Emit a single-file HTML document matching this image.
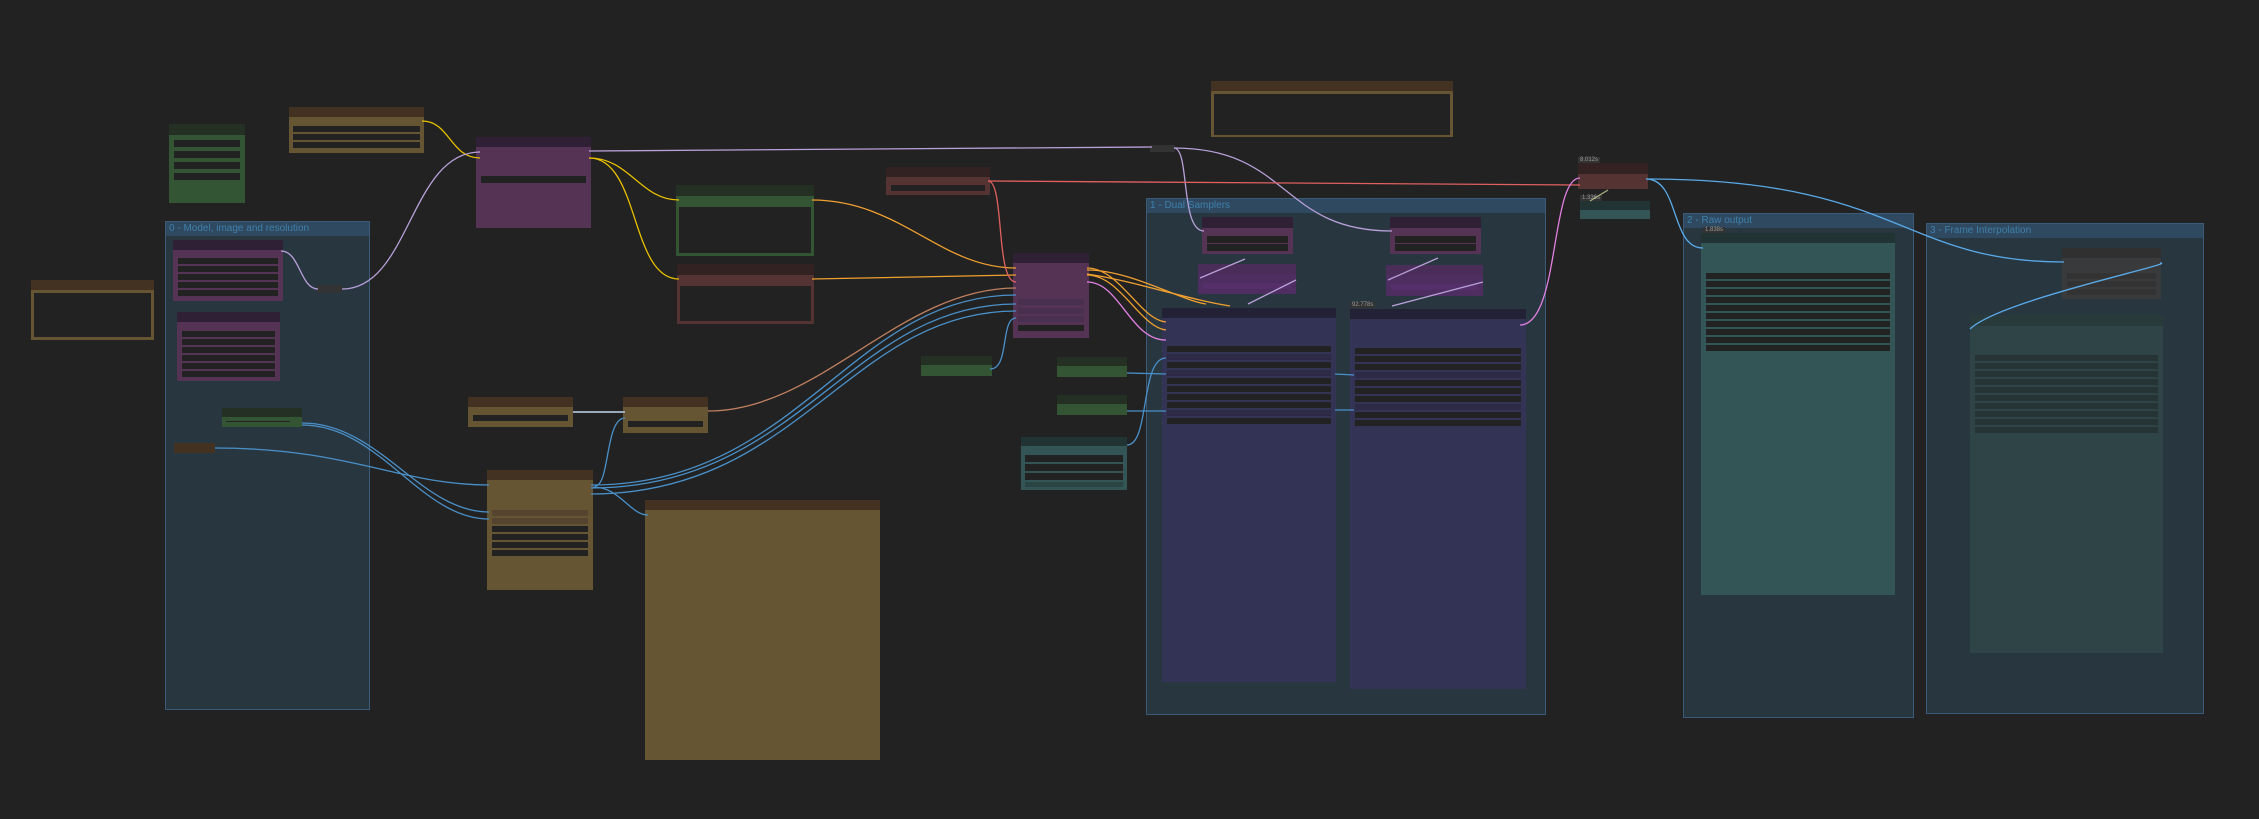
<!DOCTYPE html>
<html><head><meta charset="utf-8"><style>
html,body{margin:0;padding:0;background:#222;width:2259px;height:819px;overflow:hidden;font-family:"Liberation Sans",sans-serif}
.a{position:absolute;box-sizing:border-box}
.g{position:absolute;background:#283640;border:1px solid #3a5a78}
.g .t{height:14px;background:#2f4a60;color:#3f7eaa;font-size:10px;line-height:14px;padding-left:3px;white-space:nowrap;overflow:hidden}
.n{position:absolute}
.h{position:absolute;left:0;right:0;top:0}
.w{position:absolute;background:#222}
.lbl{position:absolute;font-size:6px;color:#999;background:#333;padding:0 2px}
</style></head><body>

<!-- groups -->
<div class="g" style="left:165px;top:221px;width:203px;height:487px"><div class="t">0 - Model, image and resolution</div></div>
<div class="g" style="left:1146px;top:198px;width:398px;height:515px"><div class="t">1 - Dual Samplers</div></div>
<div class="g" style="left:1683px;top:213px;width:229px;height:503px"><div class="t">2 - Raw output</div></div>
<div class="g" style="left:1926px;top:223px;width:276px;height:489px"><div class="t">3 - Frame Interpolation</div></div>

<!-- green node top-left -->
<div class="n" style="left:169px;top:124px;width:76px;height:79px;background:#335533"><div class="h" style="height:11px;background:#233023"></div>
<div class="w" style="left:5px;top:16px;width:66px;height:7px"></div><div class="w" style="left:5px;top:27px;width:66px;height:7px"></div><div class="w" style="left:5px;top:38px;width:66px;height:7px"></div><div class="w" style="left:5px;top:49px;width:66px;height:7px"></div></div>

<!-- brown top -->
<div class="n" style="left:289px;top:107px;width:135px;height:46px;background:#665533"><div class="h" style="height:10px;background:#433222"></div>
<div class="w" style="left:4px;top:19px;width:127px;height:6px"></div><div class="w" style="left:4px;top:27px;width:127px;height:6px"></div><div class="w" style="left:4px;top:35px;width:127px;height:6px"></div></div>

<!-- purple big -->
<div class="n" style="left:476px;top:137px;width:115px;height:91px;background:#553355"><div class="h" style="height:10px;background:#2f2036"></div>
<div class="w" style="left:5px;top:39px;width:105px;height:7px"></div></div>

<!-- brown left -->
<div class="n" style="left:31px;top:280px;width:123px;height:60px;background:#665533"><div class="h" style="height:10px;background:#433222"></div>
<div class="w" style="left:3px;top:13px;width:117px;height:44px"></div></div>

<!-- purple in group -->
<div class="n" style="left:173px;top:240px;width:110px;height:61px;background:#553355"><div class="h" style="height:10px;background:#2f2036"></div>
<div class="w" style="left:5px;top:18px;width:100px;height:6px"></div><div class="w" style="left:5px;top:26px;width:100px;height:6px"></div><div class="w" style="left:5px;top:34px;width:100px;height:6px"></div><div class="w" style="left:5px;top:42px;width:100px;height:6px"></div><div class="w" style="left:5px;top:50px;width:100px;height:6px"></div></div>
<div class="n" style="left:177px;top:312px;width:103px;height:69px;background:#553355"><div class="h" style="height:10px;background:#2f2036"></div>
<div class="w" style="left:5px;top:19px;width:93px;height:6px"></div><div class="w" style="left:5px;top:27px;width:93px;height:6px"></div><div class="w" style="left:5px;top:35px;width:93px;height:6px"></div><div class="w" style="left:5px;top:43px;width:93px;height:6px"></div><div class="w" style="left:5px;top:51px;width:93px;height:6px"></div><div class="w" style="left:5px;top:59px;width:93px;height:6px"></div></div>

<div class="n" style="left:222px;top:408px;width:80px;height:19px;background:#335533"><div class="h" style="height:9px;background:#233023"></div><div style="position:absolute;left:4px;top:13px;width:64px;height:1px;background:#222"></div></div>
<div class="n" style="left:174px;top:443px;width:41px;height:10px;background:#433222"></div>
<div class="n" style="left:317px;top:285px;width:25px;height:8px;background:#333"></div>

<!-- green & red mid -->
<div class="n" style="left:676px;top:185px;width:138px;height:71px;background:#335533"><div class="h" style="height:11px;background:#233023"></div><div class="w" style="left:3px;top:22px;width:132px;height:46px"></div></div>
<div class="n" style="left:677px;top:264px;width:137px;height:60px;background:#553333"><div class="h" style="height:11px;background:#332222"></div><div class="w" style="left:3px;top:22px;width:131px;height:35px"></div></div>
<div class="n" style="left:886px;top:167px;width:104px;height:28px;background:#553333"><div class="h" style="height:10px;background:#332222"></div><div class="w" style="left:5px;top:18px;width:94px;height:6px"></div></div>

<!-- purple mid -->
<div class="n" style="left:1013px;top:253px;width:76px;height:85px;background:#553355"><div class="h" style="height:10px;background:#2f2036"></div>
<div class="w" style="left:5px;top:46px;width:66px;height:6px;background:#4a3050"></div><div class="w" style="left:5px;top:55px;width:66px;height:6px;background:#4a3050"></div><div class="w" style="left:5px;top:63px;width:66px;height:6px;background:#4a3050"></div><div class="w" style="left:5px;top:72px;width:66px;height:6px"></div></div>

<div class="n" style="left:921px;top:356px;width:71px;height:20px;background:#335533"><div class="h" style="height:9px;background:#233023"></div></div>
<div class="n" style="left:1057px;top:357px;width:70px;height:20px;background:#335533"><div class="h" style="height:9px;background:#233023"></div></div>
<div class="n" style="left:1057px;top:395px;width:70px;height:20px;background:#335533"><div class="h" style="height:9px;background:#233023"></div></div>
<div class="n" style="left:1021px;top:437px;width:106px;height:53px;background:#335555"><div class="h" style="height:9px;background:#223333"></div>
<div class="w" style="left:4px;top:18px;width:98px;height:7px"></div><div class="w" style="left:4px;top:27px;width:98px;height:7px"></div><div class="w" style="left:4px;top:36px;width:98px;height:7px"></div><div class="w" style="left:4px;top:45px;width:98px;height:5px;background:#2a4444"></div></div>

<!-- brown lower -->
<div class="n" style="left:468px;top:397px;width:105px;height:30px;background:#665533"><div class="h" style="height:10px;background:#433222"></div><div class="w" style="left:5px;top:18px;width:95px;height:6px"></div></div>
<div class="n" style="left:623px;top:397px;width:85px;height:36px;background:#665533"><div class="h" style="height:10px;background:#433222"></div><div class="w" style="left:5px;top:24px;width:75px;height:6px"></div></div>
<div class="n" style="left:487px;top:470px;width:106px;height:120px;background:#665533"><div class="h" style="height:10px;background:#433222"></div>
<div class="w" style="left:5px;top:40px;width:96px;height:6px;background:#554430"></div><div class="w" style="left:5px;top:48px;width:96px;height:6px;background:#554430"></div><div class="w" style="left:5px;top:56px;width:96px;height:6px"></div><div class="w" style="left:5px;top:64px;width:96px;height:6px"></div><div class="w" style="left:5px;top:72px;width:96px;height:6px"></div><div class="w" style="left:5px;top:80px;width:96px;height:6px"></div></div>
<div class="n" style="left:645px;top:500px;width:235px;height:260px;background:#665533"><div class="h" style="height:10px;background:#433222"></div></div>

<!-- brown top right -->
<div class="n" style="left:1211px;top:81px;width:242px;height:56px;background:#665533"><div class="h" style="height:10px;background:#433222"></div><div class="w" style="left:3px;top:13px;width:236px;height:41px"></div></div>
<div class="n" style="left:1150px;top:145px;width:25px;height:7px;background:#333"></div>

<!-- group 1 content -->
<div class="n" style="left:1202px;top:217px;width:91px;height:37px;background:#553355"><div class="h" style="height:11px;background:#2f2036"></div><div class="w" style="left:5px;top:19px;width:81px;height:7px"></div><div class="w" style="left:5px;top:27px;width:81px;height:7px"></div></div>
<div class="n" style="left:1390px;top:217px;width:91px;height:37px;background:#553355"><div class="h" style="height:11px;background:#2f2036"></div><div class="w" style="left:5px;top:19px;width:81px;height:7px"></div><div class="w" style="left:5px;top:27px;width:81px;height:7px"></div></div>
<div class="n" style="left:1198px;top:264px;width:98px;height:30px;background:#4e2e60"><div class="h" style="height:10px;background:#4a2d58"></div><div class="w" style="left:5px;top:19px;width:88px;height:6px;background:#552f6a"></div></div>
<div class="n" style="left:1386px;top:265px;width:97px;height:31px;background:#4e2e60"><div class="h" style="height:10px;background:#4a2d58"></div><div class="w" style="left:5px;top:19px;width:87px;height:6px;background:#552f6a"></div></div>

<div class="n" style="left:1162px;top:308px;width:174px;height:374px;background:#333355"><div class="h" style="height:10px;background:#232135"></div>
<div class="w" style="left:5px;top:38px;width:164px;height:6px"></div><div class="w" style="left:5px;top:46px;width:164px;height:6px;background:#2c2a45"></div><div class="w" style="left:5px;top:54px;width:164px;height:6px"></div><div class="w" style="left:5px;top:62px;width:164px;height:6px;background:#2c2a45"></div><div class="w" style="left:5px;top:70px;width:164px;height:6px"></div><div class="w" style="left:5px;top:78px;width:164px;height:6px"></div><div class="w" style="left:5px;top:86px;width:164px;height:6px"></div><div class="w" style="left:5px;top:94px;width:164px;height:6px"></div><div class="w" style="left:5px;top:102px;width:164px;height:6px;background:#2c2a45"></div><div class="w" style="left:5px;top:110px;width:164px;height:6px"></div></div>
<div class="n" style="left:1350px;top:309px;width:176px;height:380px;background:#333355"><div class="h" style="height:10px;background:#232135"></div>
<div class="w" style="left:5px;top:39px;width:166px;height:6px"></div><div class="w" style="left:5px;top:47px;width:166px;height:6px"></div><div class="w" style="left:5px;top:55px;width:166px;height:6px"></div><div class="w" style="left:5px;top:63px;width:166px;height:6px;background:#2c2a45"></div><div class="w" style="left:5px;top:71px;width:166px;height:6px"></div><div class="w" style="left:5px;top:79px;width:166px;height:6px"></div><div class="w" style="left:5px;top:87px;width:166px;height:6px"></div><div class="w" style="left:5px;top:95px;width:166px;height:6px;background:#2c2a45"></div><div class="w" style="left:5px;top:103px;width:166px;height:6px"></div><div class="w" style="left:5px;top:111px;width:166px;height:6px"></div></div>
<div class="lbl" style="left:1350px;top:302px">92.778s</div>

<!-- red / teal small right -->
<div class="n" style="left:1578px;top:163px;width:70px;height:26px;background:#553333"><div class="h" style="height:11px;background:#332222"></div></div>
<div class="lbl" style="left:1578px;top:157px">8.012s</div>
<div class="n" style="left:1580px;top:201px;width:70px;height:18px;background:#335555"><div class="h" style="height:9px;background:#223333"></div></div>
<div class="lbl" style="left:1580px;top:195px">1.336s</div>

<!-- teal output -->
<div class="n" style="left:1701px;top:233px;width:194px;height:362px;background:#335555"><div class="h" style="height:10px;background:#223333"></div>
<div class="w" style="left:5px;top:40px;width:184px;height:6px"></div><div class="w" style="left:5px;top:48px;width:184px;height:6px"></div><div class="w" style="left:5px;top:56px;width:184px;height:6px"></div><div class="w" style="left:5px;top:64px;width:184px;height:6px"></div><div class="w" style="left:5px;top:72px;width:184px;height:6px"></div><div class="w" style="left:5px;top:80px;width:184px;height:6px"></div><div class="w" style="left:5px;top:88px;width:184px;height:6px"></div><div class="w" style="left:5px;top:96px;width:184px;height:6px"></div><div class="w" style="left:5px;top:104px;width:184px;height:6px"></div><div class="w" style="left:5px;top:112px;width:184px;height:6px"></div></div>
<div class="lbl" style="left:1703px;top:227px">1.838s</div>

<!-- group 3 content -->
<div class="n" style="left:2062px;top:248px;width:99px;height:51px;background:#393a3c"><div class="h" style="height:10px;background:#303030"></div>
<div class="w" style="left:5px;top:25px;width:89px;height:6px;background:#333"></div><div class="w" style="left:5px;top:33px;width:89px;height:6px;background:#333"></div><div class="w" style="left:5px;top:41px;width:89px;height:6px;background:#333"></div></div>
<div class="n" style="left:1970px;top:315px;width:193px;height:338px;background:#2e4446"><div class="h" style="height:11px;background:#293a3b"></div>
<div class="w" style="left:5px;top:40px;width:183px;height:6px;background:#263436"></div><div class="w" style="left:5px;top:48px;width:183px;height:6px;background:#263436"></div><div class="w" style="left:5px;top:56px;width:183px;height:6px;background:#263436"></div><div class="w" style="left:5px;top:64px;width:183px;height:6px;background:#263436"></div><div class="w" style="left:5px;top:72px;width:183px;height:6px;background:#263436"></div><div class="w" style="left:5px;top:80px;width:183px;height:6px;background:#263436"></div><div class="w" style="left:5px;top:88px;width:183px;height:6px;background:#263436"></div><div class="w" style="left:5px;top:96px;width:183px;height:6px;background:#263436"></div><div class="w" style="left:5px;top:104px;width:183px;height:6px;background:#263436"></div><div class="w" style="left:5px;top:112px;width:183px;height:6px;background:#263436"></div></div>

<!-- wires -->
<svg class="a" style="left:0;top:0" width="2259" height="819" fill="none" stroke-width="1.3">
<g stroke="#e8c000">
<path d="M422 121 C450 121 450 158 480 158"/>
<path d="M589 158 C630 158 640 200 679 200"/>
<path d="M589 158 C640 158 630 279 679 279"/>
</g>
<g stroke="#b8a0d8">
<path d="M342 289 C410 289 410 152 480 152"/>
<path d="M281 251 C300 251 300 289 318 289"/>
<path d="M589 151 L1152 147"/>
<path d="M1174 148 C1190 148 1180 231 1204 231"/>
<path d="M1174 148 C1290 148 1280 231 1392 231"/>
<path d="M1245 259 L1200 278"/><path d="M1438 258 L1388 280"/>
<path d="M1296 280 L1248 304"/><path d="M1483 282 L1392 306"/>
</g>
<g stroke="#f0a030">
<path d="M812 200 C900 200 940 268 1016 268"/>
<path d="M812 279 L1016 275"/>
<path d="M1087 268 C1120 268 1140 320 1166 322"/>
<path d="M1087 275 C1120 275 1140 327 1166 330"/>
<path d="M1087 270 C1130 270 1180 300 1206 304"/>
<path d="M1087 274 C1130 280 1190 300 1230 306"/>
</g>
<path d="M988 181 L1580 185" stroke="#e06060"/>
<path d="M988 181 C1005 181 995 282 1016 282" stroke="#e06060"/>
<path d="M708 411 C820 411 900 288 1016 288" stroke="#c08060"/>
<g stroke="#e080e0"><path d="M1087 282 C1120 282 1130 340 1166 340"/><path d="M1520 325 C1560 325 1550 178 1580 178"/></g>
<g stroke="#4a90c8">
<path d="M591 485 C800 485 850 295 1016 295"/>
<path d="M591 488 C800 488 850 304 1016 304"/>
<path d="M591 494 C800 494 850 311 1016 311"/>
<path d="M215 448 C350 448 400 485 489 485"/>
<path d="M302 423 C380 423 420 512 489 512"/>
<path d="M302 425 C380 425 420 519 489 519"/>
<path d="M593 487 C620 487 630 515 648 515"/>
<path d="M625 418 C605 418 610 486 595 486"/>
<path d="M990 369 C1010 369 1000 318 1016 318"/>
<path d="M1127 373 L1166 374"/>
<path d="M1127 411 L1166 411"/>
<path d="M1127 445 C1150 445 1140 358 1166 358"/>
<path d="M1335 374 L1354 375"/><path d="M1335 410 L1354 410"/>
</g>
<g stroke="#5aaae8">
<path d="M1646 179 C1680 179 1670 248 1703 248"/>
<path d="M1646 179 C1900 179 1900 262 2064 262"/>
<path d="M2160 263 C2180 263 2000 300 1970 329"/>
</g>
<path d="M573 412 L625 412" stroke="#9ab" stroke-width="2"/>
<path d="M1608 190 L1590 201" stroke="#aab080"/>
</svg>
</body></html>
